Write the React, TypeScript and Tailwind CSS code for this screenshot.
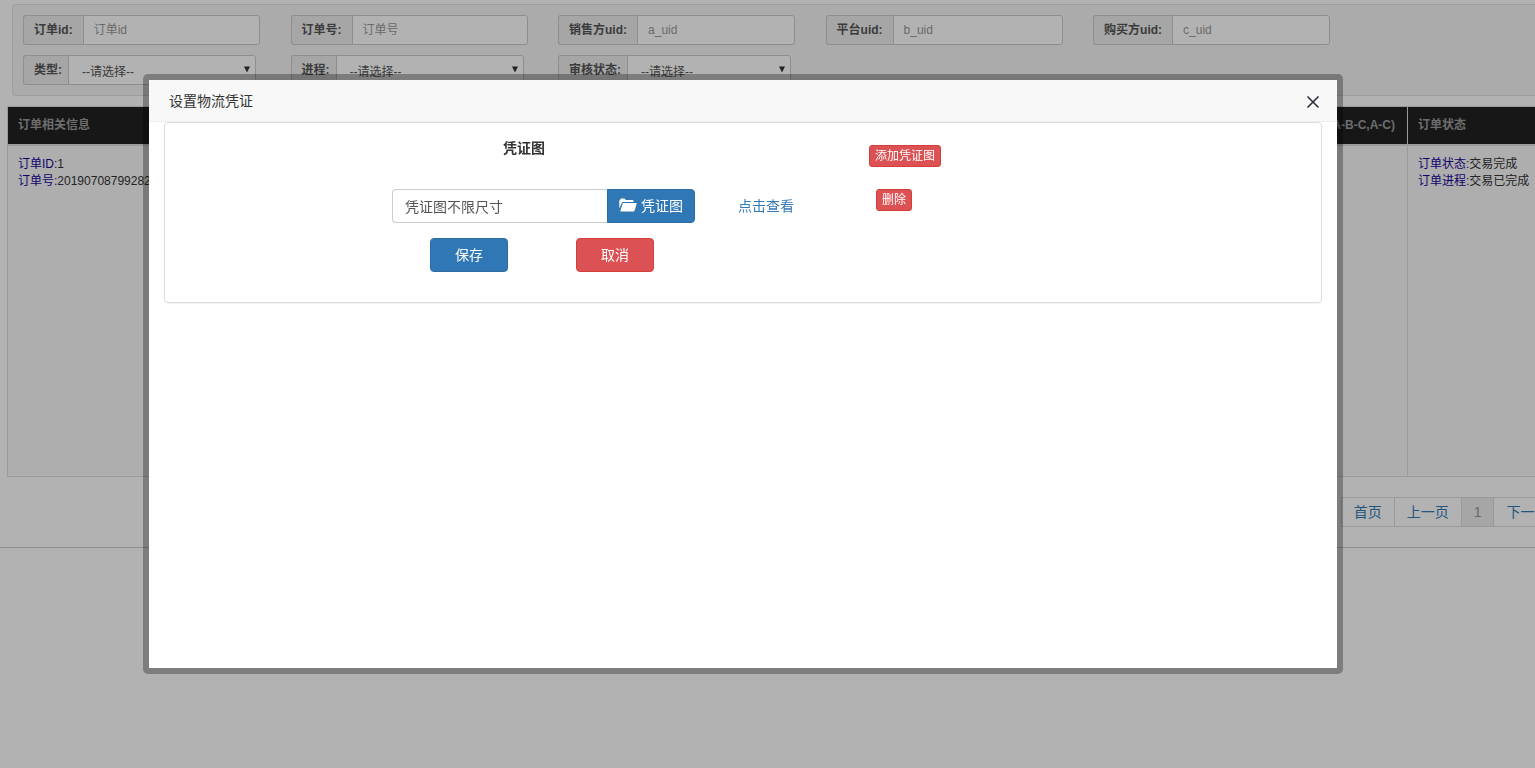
import React from "react";

const textFields = [
  { id: "order-id", label: "订单id:", placeholder: "订单id" },
  { id: "order-no", label: "订单号:", placeholder: "订单号" },
  { id: "a-uid", label: "销售方uid:", placeholder: "a_uid" },
  { id: "b-uid", label: "平台uid:", placeholder: "b_uid" },
  { id: "c-uid", label: "购买方uid:", placeholder: "c_uid" },
];

const selectFields = [
  { id: "type", label: "类型:" },
  { id: "progress", label: "进程:" },
  { id: "audit", label: "审核状态:" },
];

function FieldLabel({ id, text, tight = false }: { id: string; text: string; tight?: boolean }) {
  return (
    <label
      htmlFor={id}
      className={`flex shrink-0 items-center rounded-l-[3px] border border-r-0 border-[#ccc] bg-[#eee] pl-[10px] font-bold text-[#555] ${tight ? "pr-[6px]" : "pr-[10px]"}`}
    >
      {text}
    </label>
  );
}

function SearchForm() {
  return (
    <form className="ml-3 grid w-[106%] grid-cols-6 gap-y-[10px] rounded border border-[#e3e3e3] bg-[#f5f5f5] p-[10px] text-[12px]">
      {textFields.map((f) => (
        <div key={f.id} className="flex h-[30px] w-[237px]">
          <FieldLabel id={f.id} text={f.label} />
          <input
            id={f.id}
            type="text"
            placeholder={f.placeholder}
            className="min-w-0 flex-1 rounded-r-[3px] border border-[#ccc] bg-white px-[10px] text-[#555] placeholder:text-[#999]"
          />
        </div>
      ))}
      {selectFields.map((f, i) => (
        <div
          key={f.id}
          className={i === 0 ? "col-start-1 flex h-[30px] w-[233px]" : "flex h-[30px] w-[233px]"}
        >
          <FieldLabel id={f.id} text={f.label} tight />
          <div className="relative flex min-w-0 flex-1">
            <select
              id={f.id}
              className="w-full appearance-none rounded-r-[3px] border border-[#ccc] bg-white pt-1 pl-[13px] text-[#555]"
            >
              <option>--请选择--</option>
            </select>
            <svg
              aria-hidden="true"
              viewBox="0 0 8 7"
              className="pointer-events-none absolute top-[11px] right-[5px] h-[7px] w-2 fill-[#333]"
            >
              <path d="M1 0.5h6L4 6.5z" />
            </svg>
          </div>
        </div>
      ))}
    </form>
  );
}

function OrderTable() {
  return (
    <table className="mt-[10px] ml-[7px] w-[107%] table-fixed border-separate border-spacing-0 border border-[#ddd] bg-[#f9f9f9] text-[12px] leading-[17px]">
      <colgroup>
        <col className="w-[400px]" />
        <col className="w-[1000px]" />
        <col />
      </colgroup>
      <thead>
        <tr className="h-[37px] bg-[#222] text-[#9d9d9d]">
          <th className="border-r border-[#ddd] px-[10px] text-left font-bold">订单相关信息</th>
          <th className="border-r border-[#ddd] px-3 text-right font-bold">(A-B-C,A-C)</th>
          <th className="px-[10px] text-left font-bold">订单状态</th>
        </tr>
      </thead>
      <tbody>
        <tr className="h-[332px] align-top text-[#333]">
          <td className="border-t-2 border-r border-[#ddd] px-[10px] py-[10px]">
            <p><span className="text-[#1a0599]">订单ID:</span>1</p>
            <p><span className="text-[#1a0599]">订单号:</span>20190708799282</p>
          </td>
          <td className="border-t-2 border-r border-[#ddd]" />
          <td className="border-t-2 border-[#ddd] px-[10px] py-[10px]">
            <p><span className="text-[#1a0599]">订单状态:</span>交易完成</p>
            <p><span className="text-[#1a0599]">订单进程:</span>交易已完成</p>
          </td>
        </tr>
      </tbody>
    </table>
  );
}

function Pagination() {
  const link = "-ml-px flex h-[30px] items-center border border-[#ddd] bg-white px-3 text-[#337ab7]";
  return (
    <nav className="mt-5 flex w-[107%] justify-end pr-[81px] text-[14px]">
      <a href="#first" className={link}>首页</a>
      <a href="#prev" className={link}>上一页</a>
      <span className="-ml-px flex h-[30px] items-center border border-[#ddd] bg-[#eee] px-3 text-[#999]">1</span>
      <a href="#next" className={link}>下一页</a>
    </nav>
  );
}

function FolderOpenIcon() {
  return (
    <svg aria-hidden="true" viewBox="0 0 18 14" className="mb-[2px] h-[14px] w-[18px] fill-white">
      <path d="M0.3 10.6V2.4L1 2.1 1.5 1Q1.7 0.5 2.3 0.5H5.3Q5.8 0.5 6.1 1L6.7 2.1H13.7Q14.5 2.1 14.5 2.9V4.1H4.1Q3.1 4.1 2.7 5z" />
      <path d="M4.4 5.1H17.2Q17.9 5.1 17.7 5.8L15.6 12.6Q15.3 13.5 14.4 13.5H2Q1.1 13.5 1.4 12.7L3.6 5.7Q3.8 5.1 4.4 5.1z" />
    </svg>
  );
}

function VoucherDialog() {
  const smallRed =
    "flex h-[22px] items-center rounded-[3px] border border-[#d43f3a] bg-[#dc5153] px-[5px] text-[12px] text-white";
  const action = "flex h-[34px] items-center rounded border px-6 text-white";
  return (
    <section
      role="dialog"
      aria-labelledby="dialog-title"
      className="fixed top-[74px] right-48 bottom-[94px] left-[143px] flex flex-col rounded-[5px] border-[6px] border-black/30 bg-white bg-clip-padding text-[14px] leading-5 text-[#333]"
    >
      <header className="flex h-[42px] shrink-0 items-center justify-between border-b border-[#eee] bg-[#f8f8f8] pr-[17px] pl-5">
        <h2 id="dialog-title">设置物流凭证</h2>
        <button type="button" aria-label="关闭" className="mt-[2px]">
          <svg viewBox="0 0 14 14" className="h-[14px] w-[14px] fill-none stroke-[#2e2d3c] stroke-[1.6]">
            <path d="M1.5 1.5l11 11M12.5 1.5l-11 11" />
          </svg>
        </button>
      </header>
      <form className="mx-[15px] rounded border border-[#ddd] pt-[15px] pb-[30px] pl-[227px] shadow-[0_1px_1px_rgba(0,0,0,0.05)]">
        <div className="grid grid-cols-[346px_131px_auto] items-start justify-start gap-y-[22px]">
          <h3 className="w-[264px] text-center font-bold">凭证图</h3>
          <span />
          <div className="pt-[7px]">
            <button type="button" className={smallRed}>添加凭证图</button>
          </div>
          <div className="flex h-[34px] w-[303px]">
            <input
              type="text"
              aria-label="凭证图"
              defaultValue="凭证图不限尺寸"
              className="min-w-0 flex-1 rounded-l border border-r-0 border-[#ccc] px-3 pt-px text-[#555]"
            />
            <button
              type="button"
              className="flex shrink-0 items-center gap-1 rounded-r border border-[#2e6da4] bg-[#3077b5] px-[11px] text-white"
            >
              <FolderOpenIcon />
              凭证图
            </button>
          </div>
          <a href="#view" className="self-center text-[#337ab7]">点击查看</a>
          <div className="pl-[7px]">
            <button type="button" className={smallRed}>删除</button>
          </div>
        </div>
        <div className="mt-[15px] flex gap-[68px] pl-[38px]">
          <button type="submit" className={`${action} border-[#2e6da4] bg-[#3077b5]`}>保存</button>
          <button type="button" className={`${action} border-[#d43f3a] bg-[#dc5153]`}>取消</button>
        </div>
      </form>
    </section>
  );
}

export default function App() {
  return (
    <div className="min-h-screen overflow-hidden bg-white pt-1 font-['Liberation_Sans','Noto_Sans_CJK_SC',sans-serif]">
      <main>
        <SearchForm />
        <OrderTable />
        <Pagination />
        <hr className="mt-5 border-[#ccc]" />
      </main>
      <div className="fixed inset-0 bg-black/30" />
      <VoucherDialog />
    </div>
  );
}
